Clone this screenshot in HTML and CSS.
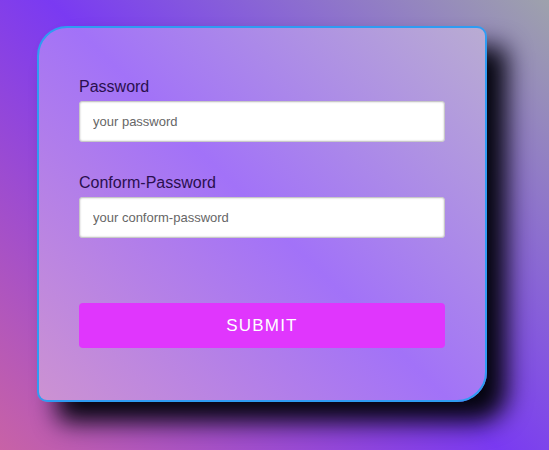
FILE: index.html
```html
<!DOCTYPE html>
<html>
<head>
<meta charset="utf-8">
<link rel="stylesheet" href="styles.css">
</head>
<body>
<form class="card">
  <div class="field">
    <label class="label">Password</label>
    <input class="input" type="password" placeholder="your password">
  </div>
  <div class="field">
    <label class="label">Conform-Password</label>
    <input class="input" type="password" placeholder="your conform-password">
  </div>
  <button class="submit" type="button">SUBMIT</button>
</form>
</body>
</html>
```
FILE: styles.css
```css
html, body {
  margin: 0;
  padding: 0;
}
body {
  width: 549px;
  height: 450px;
  overflow: hidden;
  background: linear-gradient(45deg, #c862a6 0%, #7a3af2 50%, #9ea2ac 100%);
  font-family: "Liberation Sans", Arial, sans-serif;
  padding-top: 26px;
  padding-left: 37px;
  box-sizing: border-box;
}
.card {
  width: 450px;
  height: 376px;
  box-sizing: border-box;
  border: 2px solid #2f9cf2;
  border-radius: 30px 10px 30px 10px;
  background: linear-gradient(45deg, #cc92d2 0%, #a272f8 50%, #b9acd2 100%);
  box-shadow: 20px 20px 25px #05050f;
  padding: 50px 40px 0 40px;
  display: flex;
  flex-direction: column;
}
.field {
  display: flex;
  flex-direction: column;
  gap: 5px;
  margin-bottom: 32px;
}
.label {
  font-size: 16px;
  line-height: 18px;
  color: #2a0f4e;
}
.input {
  width: 366px;
  height: 41px;
  box-sizing: border-box;
  border: 1px solid #c8c8c8;
  border-radius: 3px;
  background: #fff;
  box-shadow: inset 0 0 2px rgba(0,0,0,0.25);
  padding: 0 13px;
  font-family: "Liberation Sans", Arial, sans-serif;
  font-size: 13px;
  outline: none;
}
.input::placeholder {
  color: #666666;
}
.submit {
  margin-top: 33px;
  width: 366px;
  height: 45px;
  border: none;
  border-radius: 4px;
  background: #e036fd;
  color: #fff;
  font-family: "Liberation Sans", Arial, sans-serif;
  font-size: 17px;
  letter-spacing: 1.2px;
  padding: 0;
}
```
